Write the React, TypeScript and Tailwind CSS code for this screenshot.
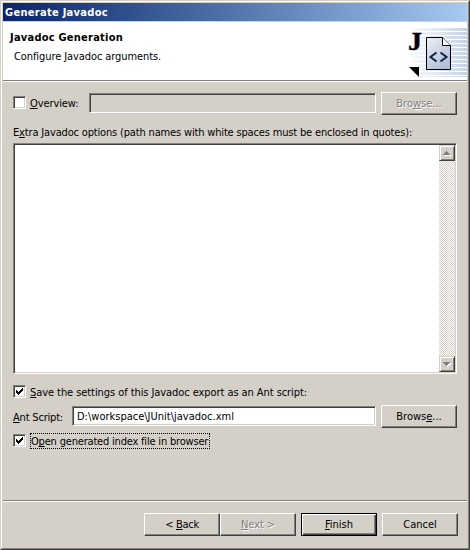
import React from "react";

const FACE = {
  raised:
    "border border-t-white border-l-white border-r-[#404040] border-b-[#404040] shadow-[inset_-1px_-1px_0_#808080]",
  sunken:
    "border border-t-[#808080] border-l-[#808080] border-r-white border-b-white shadow-[inset_1px_1px_0_#404040,inset_-1px_-1px_0_#d4d0c8]",
};

function Key({ children }: { children: string }) {
  return (
    <span className="underline decoration-1 underline-offset-[1px] [text-decoration-skip-ink:none]">
      {children}
    </span>
  );
}

function Button({
  children,
  disabled,
  primary,
  className = "",
}: {
  children: React.ReactNode;
  disabled?: boolean;
  primary?: boolean;
  className?: string;
}) {
  const tone = disabled ? "text-[#808080] [text-shadow:1px_1px_0_#fff]" : "text-black";
  const edge = primary
    ? "border border-black shadow-[inset_1px_1px_0_#fff,inset_-1px_-1px_0_#404040,inset_-2px_-2px_0_#808080]"
    : FACE.raised;
  return (
    <button
      type="button"
      disabled={disabled}
      className={`flex h-[23px] w-[76px] shrink-0 items-center justify-center bg-[#d4d0c8] leading-[13px] ${edge} ${tone} ${className}`}
    >
      <span>{children}</span>
    </button>
  );
}

function CheckBox({ checked, className = "" }: { checked?: boolean; className?: string }) {
  return (
    <span
      className={`flex size-[13px] shrink-0 items-center justify-center bg-white ${FACE.sunken} ${className}`}
    >
      {checked && (
        <svg width="7" height="7" viewBox="0 0 7 7" shapeRendering="crispEdges">
          <path d="M0 2h1v1h1v1h1v-1h1v-1h1v-1h1v-1h1v3h-1v1h-1v1h-1v1h-1v1h-1v-1h-1v-1h-1z" />
        </svg>
      )}
    </span>
  );
}

function ScrollButton({ down }: { down?: boolean }) {
  return (
    <span className="flex size-4 items-center justify-center border border-t-[#d4d0c8] border-l-[#d4d0c8] border-r-[#404040] border-b-[#404040] bg-[#d4d0c8] shadow-[inset_1px_1px_0_#fff,inset_-1px_-1px_0_#808080]">
      <svg width="8" height="6" viewBox="0 0 8 6" shapeRendering="crispEdges">
        {down ? (
          <>
            <path d="M1 2h7v1h-1v1h-1v1h-1v1h-1v-1h-1v-1h-1v-1h-1z" fill="#fff" />
            <path d="M0 1h7v1h-1v1h-1v1h-1v1h-1v-1h-1v-1h-1v-1h-1z" fill="#808080" />
          </>
        ) : (
          <>
            <path d="M4 2h1v1h1v1h1v1h1v1h-7v-1h1v-1h1v-1h1z" fill="#fff" />
            <path d="M3 1h1v1h1v1h1v1h1v1h-7v-1h1v-1h1v-1h1z" fill="#808080" />
          </>
        )}
      </svg>
    </span>
  );
}

function JavadocBanner() {
  return (
    <svg width="60" height="58" viewBox="0 0 60 58" className="shrink-0">
      <defs>
        <linearGradient id="fade" x1="0" x2="1" y1="0" y2="0">
          <stop offset="0" stopColor="#b4c3da" stopOpacity="0.1" />
          <stop offset="0.45" stopColor="#b4c3da" stopOpacity="0.35" />
          <stop offset="1" stopColor="#b4c3da" stopOpacity="0.75" />
        </linearGradient>
        <linearGradient id="sheet" x1="0" x2="0.6" y1="0" y2="1">
          <stop offset="0" stopColor="#eceff5" />
          <stop offset="1" stopColor="#b3c0d8" />
        </linearGradient>
        <pattern id="lines" width="60" height="4" patternUnits="userSpaceOnUse" y="2">
          <rect width="60" height="3" fill="#fff" />
        </pattern>
        <mask id="stripes">
          <rect width="60" height="58" fill="url(#lines)" />
        </mask>
      </defs>
      <rect x="4" y="6" width="56" height="49" fill="url(#fade)" mask="url(#stripes)" />
      <text
        x="1"
        y="28"
        fontSize="25"
        fontWeight="bold"
        fontFamily="'Liberation Serif', serif"
        textLength="14"
        lengthAdjust="spacingAndGlyphs"
        stroke="#000"
        strokeWidth="0.4"
      >
        J
      </text>
      <path d="M2 45h10v10z" fill="#000" />
      <path d="M19.5 15.5h16l8 8v24h-24z" fill="url(#sheet)" stroke="#000" />
      <path d="M35.500 15.500v8h8" fill="#fff" stroke="#000" />
      <path
        d="M29.500 30.500l-6 4.500 6 4.500M33.500 30.500l6 4.500-6 4.500"
        fill="none"
        stroke="#0d2446"
        strokeWidth="2"
      />
    </svg>
  );
}

export default function App() {
  return (
    <main className="flex h-[550px] w-[470px] flex-col border border-t-[#d4d0c8] border-l-[#d4d0c8] border-r-[#404040] border-b-[#404040] bg-[#d4d0c8] font-['DejaVu_Sans_Condensed','DejaVu_Sans',sans-serif] text-[11px] leading-[13px] whitespace-nowrap text-black">
      <div className="flex flex-1 flex-col border border-t-white border-l-white border-r-[#808080] border-b-[#808080] p-px">
        <div className="h-[18px] bg-linear-to-r from-[#0a246a] to-[#a6caf0] pt-[3px] pl-[2px] font-bold tracking-[0.29px] text-white">
          Generate Javadoc
        </div>
        <header className="mt-px flex h-[60px] justify-between border-b border-white bg-white shadow-[inset_0_-1px_0_#808080]">
          <div className="pt-[9px] pl-[7px]">
            <h1 className="font-bold tracking-[0.23px]">Javadoc Generation</h1>
            <p className="mt-[6px] pl-[4px] tracking-[-0.09px]">Configure Javadoc arguments.</p>
          </div>
          <JavadocBanner />
        </header>

        <section className="flex flex-1 flex-col px-[10px]">
          <div className="mt-[10px] flex h-[23px] items-start">
            <CheckBox className="mt-[4px]" />
            <span className="mt-[5px] ml-[4px] w-[59px] tracking-[-0.09px]">
              <Key>O</Key>verview:
            </span>
            <span className={`mt-px mr-[5px] h-5 w-[287px] ${FACE.sunken}`} />
            <Button disabled>
              Bro<Key>w</Key>se...
            </Button>
          </div>

          <label className="mt-[11px] tracking-[-0.165px]">
            E<Key>x</Key>tra Javadoc options (path names with white spaces must be enclosed in quotes):
          </label>
          <div className={`mt-[4px] flex h-[231px] w-[444px] justify-end bg-white p-px ${FACE.sunken}`}>
            <div className="flex w-4 flex-col justify-between bg-[repeating-conic-gradient(#fff_0_25%,#d4d0c8_0_50%)] bg-[size:2px_2px]">
              <ScrollButton />
              <ScrollButton down />
            </div>
          </div>

          <div className="mt-[11px] flex h-[13px] items-start">
            <CheckBox checked />
            <span className="mt-px ml-[4px] tracking-[-0.07px]">
              <Key>S</Key>ave the settings of this Javadoc export as an Ant script:
            </span>
          </div>

          <div className="mt-[7px] flex h-[23px] items-start">
            <span className="mt-[6px] w-[59px] tracking-[-0.19px]">
              <Key>A</Key>nt Script:
            </span>
            <span className={`mt-px mr-[5px] h-5 w-[304px] bg-white pt-[3px] pl-[4px] ${FACE.sunken}`}>
              D:\workspace\JUnit\javadoc.xml
            </span>
            <Button>
              Brows<Key>e</Key>...
            </Button>
          </div>

          <div className="mt-[5px] flex h-4 items-start">
            <CheckBox checked className="mt-px" />
            <span className="ml-[4px] h-4 w-[180px] border border-dotted border-black pt-px tracking-[-0.19px]">
              O<Key>p</Key>en generated index file in browser
            </span>
          </div>
        </section>

        <footer className="flex h-[47px] justify-end border-t border-[#808080] pt-[12px] pr-[9px] shadow-[inset_0_1px_0_#fff]">
          <Button className="tracking-[-0.3px]">
            &lt; <Key>B</Key>ack
          </Button>
          <Button disabled className="mr-[5px] tracking-[-0.1px]">
            <Key>N</Key>ext &gt;
          </Button>
          <Button primary className="mr-[5px]">
            <Key>F</Key>inish
          </Button>
          <Button>Cancel</Button>
        </footer>
      </div>
    </main>
  );
}
